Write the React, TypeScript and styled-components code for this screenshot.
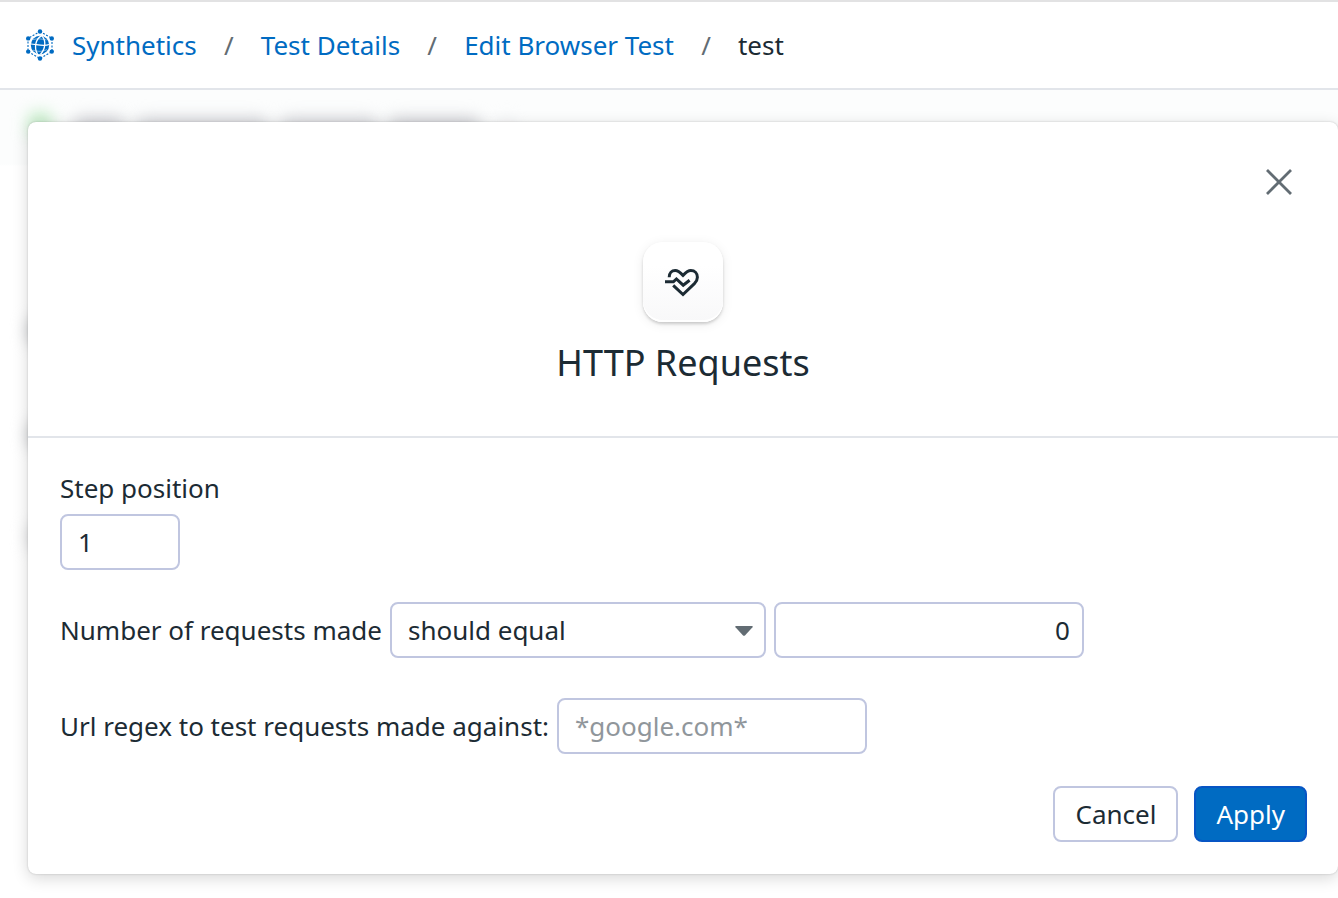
import React from 'react';
import styled, { createGlobalStyle } from 'styled-components';

const GlobalStyle = createGlobalStyle`
  *, *::before, *::after { box-sizing: border-box; }
  body {
    margin: 0;
    background: #ffffff;
    color: #1c2b34;
    font-family: "Noto Sans", "Open Sans", sans-serif;
    font-size: 26px;
    line-height: 36px;
  }
  button, input, select { font: inherit; color: inherit; }
`;

const Page = styled.div`
  display: flex;
  flex-direction: column;
  min-height: 100vh;
  overflow: hidden;
`;

const TopBar = styled.header`
  display: flex;
  align-items: center;
  height: 90px;
  padding: 0 24px;
  border-top: 2px solid #e2e2e3;
  border-bottom: 2px solid #e2e5ea;
`;

const Crumbs = styled.ol`
  display: flex;
  align-items: center;
  margin: 0;
  padding: 0;
  list-style: none;
`;

const Crumb = styled.li`
  display: flex;
  align-items: center;

  & + &::before {
    content: "/";
    width: 64px;
    text-align: center;
    color: #626c73;
  }
`;

const CrumbLink = styled.a`
  display: flex;
  align-items: center;
  gap: 16px;
  color: #006bc2;
  text-decoration: none;
`;

const Stage = styled.main`
  position: relative;
  flex: 1;
  padding: 32px 0 24px 28px;
`;

const Backdrop = styled.div`
  position: absolute;
  inset: 0;
  overflow: hidden;
  background: linear-gradient(#fcfdfd 74px, #ffffff 76px);
`;

const Haze = styled.span<{ $x: number; $y: number; $w: number; $h: number; $color: string }>`
  position: absolute;
  left: ${(p) => p.$x}px;
  top: ${(p) => p.$y}px;
  width: ${(p) => p.$w}px;
  height: ${(p) => p.$h}px;
  border-radius: 8px;
  background: ${(p) => p.$color};
  filter: blur(8px);
`;

const Dialog = styled.section`
  position: relative;
  border-radius: 8px;
  background: #ffffff;
  box-shadow: 0 0 2px rgba(0, 0, 0, 0.22), 0 4px 16px rgba(0, 0, 0, 0.16);
`;

const DialogHeader = styled.div`
  display: flex;
  flex-direction: column;
  align-items: center;
  gap: 17px;
  padding: 120px 32px 49px;
  border-bottom: 2px solid #e2e5ea;
`;

const CloseButton = styled.button`
  position: absolute;
  top: 40px;
  right: 39px;
  display: flex;
  align-items: center;
  justify-content: center;
  width: 40px;
  height: 40px;
  padding: 0;
  border: 0;
  background: none;
`;

const IconTile = styled.div`
  display: flex;
  align-items: center;
  justify-content: center;
  width: 80px;
  height: 80px;
  border-radius: 20px;
  background: linear-gradient(#ffffff 30%, #f8f8f9);
  box-shadow: inset 0 -2px 0 #ffffff, 0 2px 3px rgba(0, 0, 0, 0.17), 0 2px 12px rgba(0, 0, 0, 0.08);
`;

const Title = styled.h1`
  margin: 0;
  font-size: 36px;
  font-weight: 400;
  line-height: 48px;
`;

const Form = styled.form`
  display: flex;
  flex-direction: column;
  padding: 32px 31px 32px 32px;
`;

const Field = styled.div`
  display: flex;
  flex-direction: column;
  align-items: flex-start;
  gap: 8px;
`;

const Row = styled.div<{ $gap: number }>`
  display: flex;
  align-items: center;
  gap: 8px;
  margin-top: ${(p) => p.$gap}px;
`;

const TextInput = styled.input<{ $width: number; $align?: string }>`
  width: ${(p) => p.$width}px;
  height: 56px;
  padding: 0 ${(p) => (p.$align ? 12 : 16)}px;
  border: 2px solid #c0c6e0;
  border-radius: 8px;
  background: #ffffff;
  text-align: ${(p) => p.$align || 'left'};
  outline: none;

  &::placeholder { color: #90969b; opacity: 1; }
`;

const SelectBox = styled.div`
  position: relative;
  width: 376px;
`;

const Select = styled.select`
  display: block;
  width: 100%;
  height: 56px;
  padding: 0 48px 0 16px;
  border: 2px solid #c0c6e0;
  border-radius: 8px;
  background: #ffffff;
  appearance: none;
`;

const Caret = styled.svg`
  position: absolute;
  top: 24px;
  right: 13px;
  pointer-events: none;
`;

const Actions = styled.div`
  display: flex;
  justify-content: flex-end;
  gap: 16px;
  margin-top: 32px;
`;

const Button = styled.button<{ $primary?: boolean }>`
  height: 56px;
  padding: 0 20px;
  border: 2px solid ${(p) => (p.$primary ? '#0755c4' : '#c0c6e0')};
  border-radius: 8px;
  background: ${(p) => (p.$primary ? '#006bc2' : '#ffffff')};
  color: ${(p) => (p.$primary ? '#ffffff' : '#1c2b34')};
`;

const SyntheticsIcon = () => (
  <svg width="32" height="32" viewBox="0 0 32 32" fill="none" aria-hidden="true">
    <path d="M16 2.500 28 9.300V22.700L16 29.500 4 22.700V9.300Z" stroke="#006bc2" strokeWidth="1.1" strokeDasharray="2 1.500" />
    <g fill="#006bc2">
      <circle cx="16" cy="2.500" r="2.200" />
      <circle cx="27.800" cy="9.400" r="2.200" />
      <circle cx="27.800" cy="22.600" r="2.200" />
      <circle cx="16" cy="29.500" r="2.200" />
      <circle cx="4.200" cy="22.600" r="2.200" />
      <circle cx="4.200" cy="9.400" r="2.200" />
      <circle cx="16" cy="16" r="9.200" />
    </g>
    <g stroke="#ffffff">
      <path d="M7 15C12 15.200 20 17.800 25 15.500" strokeWidth="1.200" />
      <path d="M17.500 6.800C12 9.500 9.500 18 13.500 25.200" strokeWidth="1.300" />
      <path d="M17.500 6.800C22.500 11 21.500 20 16.500 25.200" strokeWidth="1.300" />
      <path d="M9 10.500C13 9.500 18 9.800 22.500 11" strokeWidth="0.500" />
      <path d="M9 21.200C14 22.800 19 22.800 23 20.500" strokeWidth="0.500" />
    </g>
  </svg>
);

const HeartPulseIcon = () => (
  <svg width="36" height="32" viewBox="0 0 36 32" fill="none" stroke="#1c2b34" strokeWidth="3" aria-hidden="true">
    <path d="M4.200 11.200C4.200 6.800 6.800 4.500 10.200 4.500C13.300 4.500 14.800 6 18 9.400C21.200 6 22.800 4.500 25.800 4.500C29.900 4.500 32.400 7.400 32.400 11.200C32.400 14 31.200 15.800 29.400 17.600L18 28.500L8.200 19.400" />
    <path d="M0 15.800H8.400L11.400 13L18.200 19.200L24.600 14.200" />
  </svg>
);

export default function App() {
  return (
    <Page>
      <GlobalStyle />
      <TopBar>
        <nav aria-label="Breadcrumb">
          <Crumbs>
            <Crumb>
              <CrumbLink href="#synthetics"><SyntheticsIcon />Synthetics</CrumbLink>
            </Crumb>
            <Crumb><CrumbLink href="#details">Test Details</CrumbLink></Crumb>
            <Crumb><CrumbLink href="#edit">Edit Browser Test</CrumbLink></Crumb>
            <Crumb aria-current="page">test</Crumb>
          </Crumbs>
        </nav>
      </TopBar>
      <Stage>
        <Backdrop aria-hidden="true">
          <Haze $x={28} $y={22} $w={24} $h={24} $color="#c2ecc6" />
          <Haze $x={74} $y={27} $w={50} $h={20} $color="#cfd0d5" />
          <Haze $x={136} $y={28} $w={132} $h={20} $color="#d2d3d8" />
          <Haze $x={280} $y={28} $w={98} $h={20} $color="#d2d3d8" />
          <Haze $x={388} $y={28} $w={92} $h={20} $color="#cccdd2" />
          <Haze $x={500} $y={28} $w={14} $h={16} $color="#eeeff2" />
          <Haze $x={28} $y={228} $w={30} $h={26} $color="#c6c8cb" />
          <Haze $x={28} $y={332} $w={30} $h={26} $color="#c6c8cb" />
          <Haze $x={28} $y={434} $w={30} $h={26} $color="#dadbdd" />
        </Backdrop>
        <Dialog role="dialog" aria-labelledby="dialog-title">
          <DialogHeader>
            <IconTile><HeartPulseIcon /></IconTile>
            <Title id="dialog-title">HTTP Requests</Title>
          </DialogHeader>
          <CloseButton type="button" aria-label="Close">
            <svg width="26" height="26" viewBox="0 0 26 26" stroke="#626c73" strokeWidth="2.8" aria-hidden="true">
              <path d="M1 1 25 25M25 1 1 25" />
            </svg>
          </CloseButton>
          <Form onSubmit={(e) => e.preventDefault()}>
            <Field>
              <label htmlFor="position">Step position</label>
              <TextInput id="position" $width={120} defaultValue="1" />
            </Field>
            <Row $gap={32}>
              <label htmlFor="operator">Number of requests made</label>
              <SelectBox>
                <Select id="operator" defaultValue="equal">
                  <option value="equal">should equal</option>
                </Select>
                <Caret width="18" height="10" viewBox="0 0 18 10" aria-hidden="true">
                  <path d="M1 0H17Q18.400 0 17.500 1.200L10.200 9.200Q9 10.400 7.800 9.200L.5 1.200Q-.4 0 1 0Z" fill="#626c73" />
                </Caret>
              </SelectBox>
              <TextInput $width={310} $align="right" aria-label="Request count" defaultValue="0" />
            </Row>
            <Row $gap={40}>
              <label htmlFor="regex">Url regex to test requests made against:</label>
              <TextInput id="regex" $width={310} placeholder="*google.com*" />
            </Row>
            <Actions>
              <Button type="button">Cancel</Button>
              <Button type="submit" $primary>Apply</Button>
            </Actions>
          </Form>
        </Dialog>
      </Stage>
    </Page>
  );
}
